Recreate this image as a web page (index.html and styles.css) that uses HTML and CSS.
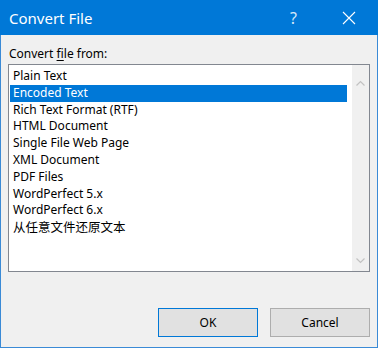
FILE: index.html
```html
<!DOCTYPE html>
<html lang="en">

<head>
    <meta charset="UTF-8">
    <title>Convert File</title>
    <link rel="stylesheet" href="styles.css">
</head>

<body>
    <div class="window">
        <div class="titlebar">
            <span class="title">Convert File</span>
            <span class="tb-btn help">?</span>
            <span class="tb-btn close">
                <svg width="14" height="14" viewBox="0 0 14 14">
                    <path d="M1 1 L13 13 M13 1 L1 13" stroke="#fff" stroke-width="1.1" fill="none" />
                </svg>
            </span>
        </div>
        <div class="content">
            <div class="label">Convert <u>f</u>ile from:</div>
            <div class="listbox">
                <div class="items">
                    <div class="item">Plain Text</div>
                    <div class="item selected">Encoded Text</div>
                    <div class="item">Rich Text Format (RTF)</div>
                    <div class="item">HTML Document</div>
                    <div class="item">Single File Web Page</div>
                    <div class="item">XML Document</div>
                    <div class="item">PDF Files</div>
                    <div class="item">WordPerfect 5.x</div>
                    <div class="item">WordPerfect 6.x</div>
                    <div class="item cjk">从任意文件还原文本</div>
                </div>
                <div class="scrollbar">
                    <svg width="17" height="17" viewBox="0 0 17 17">
                        <path d="M4.5 10.5 L8.5 6.5 L12.5 10.5" stroke="#c2c2c2" stroke-width="1.2" fill="none" />
                    </svg>
                    <svg width="17" height="17" viewBox="0 0 17 17">
                        <path d="M4.5 6.5 L8.5 10.5 L12.5 6.5" stroke="#c2c2c2" stroke-width="1.2" fill="none" />
                    </svg>
                </div>
            </div>
        </div>
        <div class="footer">
            <button type="button" class="btn default">OK</button>
            <button type="button" class="btn">Cancel</button>
        </div>
    </div>
</body>

</html>
```

FILE: styles.css
```css
body {
    margin: 0;
    font-family: "Noto Sans", "Noto Sans CJK SC", sans-serif;
    font-size: 12px;
    color: #000;
}

.window {
    width: 378px;
    height: 348px;
    box-sizing: border-box;
    border: 1px solid #3a8ad6;
    border-top: 0;
    background-color: #f0f0f0;
    display: flex;
    flex-direction: column;
}

.titlebar {
    height: 35px;
    flex-shrink: 0;
    background-color: #0078d7;
    color: white;
    display: flex;
    align-items: center;
    padding-left: 9px;
    margin: 0 -1px;
}

.title {
    flex: 1;
    font-size: 15px;
}

.tb-btn {
    width: 55px;
    height: 35px;
    display: flex;
    justify-content: center;
    align-items: center;
}

.help {
    font-size: 16px;
    color: #d6e8f8;
}

.close {
    margin-right: 2px;
}

.content {
    padding: 0 7px;
}

.label {
    height: 29px;
    line-height: 16px;
    padding-top: 11px;
    box-sizing: border-box;
    padding-left: 1px;
}

.label u {
    text-decoration-thickness: 1px;
    text-underline-offset: 2px;
}

.listbox {
    height: 206px;
    border: 1px solid #828790;
    background-color: white;
    display: flex;
}

.items {
    flex: 1;
    padding: 3px 5px 0 1px;
}

.item {
    height: 16.8px;
    line-height: 16.8px;
    padding-left: 3px;
    white-space: nowrap;
}

.item.selected {
    background-color: #0078d7;
    color: white;
}

.item.cjk {
    font-family: "Noto Sans CJK SC", sans-serif;
    font-size: 12.5px;
}

.scrollbar {
    width: 17px;
    background-color: #f0f0f0;
    display: flex;
    flex-direction: column;
    justify-content: space-between;
    padding: 10px 0 2px;
}

.footer {
    margin-top: auto;
    display: flex;
    justify-content: flex-end;
    gap: 12px;
    padding: 0 7px 10px 0;
}

.btn {
    width: 100px;
    height: 29px;
    font-family: "Noto Sans", sans-serif;
    font-size: 12px;
    background-color: #e1e1e1;
    border: 1px solid #adadad;
    padding: 0;
    color: #000;
}

.btn.default {
    border-color: #0078d7;
}
```
